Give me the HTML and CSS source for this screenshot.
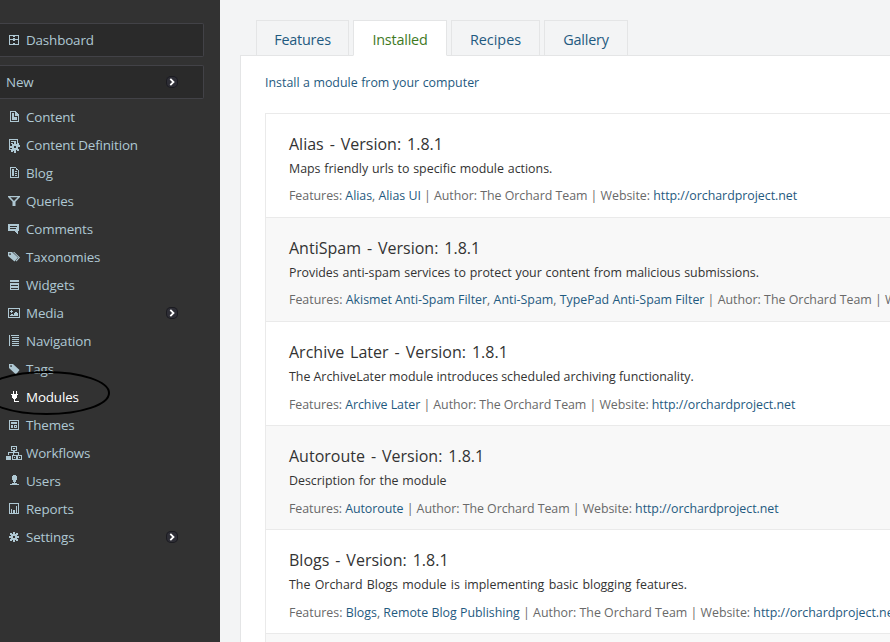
FILE: index.html
```html
<!DOCTYPE html>
<html lang="en">
<head>
<meta charset="utf-8">
<title>Modules</title>
<link rel="stylesheet" href="styles.css">
</head>
<body>
<div class="app">
<aside class="sidebar">
  <div class="box"><svg class="icon" viewBox="0 0 16 16"><path d="M3 3h10v10H3zM4 4v3h3V6h2v1h3V4H9v1H7V4zM4 8v4h3v-1h2v1h3V8H9v1H7V8z" fill-rule="evenodd"/></svg><a>Dashboard</a></div>
  <div class="box"><a>New</a><span class="arrow"><svg viewBox="0 0 12 12"><path d="M4.3 2.8 7.5 6 4.3 9.2"/></svg></span></div>
  <nav class="menu">
    <div class="item"><svg class="icon" viewBox="0 0 16 16"><path d="M4 2h6v1h1v1h1v1h1v8H4zM5 3v9h7V7H9V3z" fill-rule="evenodd"/><path d="M6 4h2v4h3v3H6z"/></svg><a>Content</a></div>
    <div class="item"><svg class="icon" viewBox="0 0 16 16"><path d="M3 2h9v4h-1V3H4v9h2v1H3zM5 4h5v1H5zM5 6h2v1H5z"/><path d="M8 5h2v2h1V6h2v2h1v2h-2v2h1v2h-2v-1h-1v3H8v-2H7v1H5v-2h1v-2H4V9h2V7h2zM8 9v2h2V9z" fill-rule="evenodd"/></svg><a>Content Definition</a></div>
    <div class="item"><svg class="icon" viewBox="0 0 16 16"><path d="M4 2h6v1h1v1h1v1h1v8H4zM5 3v9h7V5h-2V3z" fill-rule="evenodd"/><path d="M6 4h2v7H6zM9 6h2v1H9zM9 8h2v1H9zM9 10h2v1H9z"/></svg><a>Blog</a></div>
    <div class="item"><svg class="icon smooth" viewBox="0 0 16 16"><path d="M2 3h12v1L9.5 8.8V13h-3V8.8L2 4zM4.3 4.3 8 8l3.7-3.7z" fill-rule="evenodd"/></svg><a>Queries</a></div>
    <div class="item"><svg class="icon" viewBox="0 0 16 16"><path d="M2 3h11v7h-1v3h-1v-1h-1v-1H9v-1H2zM4 5v1h7V5zM4 7v1h6V7z" fill-rule="evenodd"/></svg><a>Comments</a></div>
    <div class="item"><svg class="icon smooth" viewBox="0 0 16 16"><path d="M2 3h4l6 5.5-3.5 4L2 7zM4 4.2a.8.8 0 1 0 .1 0z" fill-rule="evenodd"/><path d="M7 3h1.3L14 8.5 10.5 12.5l-.8-.8L12.5 8.5z"/></svg><a>Taxonomies</a></div>
    <div class="item"><svg class="icon" viewBox="0 0 16 16"><path d="M4 3h9v2H4zM4 6h9v7H4zM5 8v1h7V8zM5 11v1h7v-1z" fill-rule="evenodd"/></svg><a>Widgets</a></div>
    <div class="item"><svg class="icon" viewBox="0 0 16 16"><path d="M2 3h12v10H2zM3 4v8h10V4z" fill-rule="evenodd"/><path d="M5 5h1v1h1v1H6v1H5V7H4V6h1zM4 11v-1h1V9h2v1h1V8h1V7h2v1h1v3z"/></svg><a>Media</a><span class="arrow"><svg viewBox="0 0 12 12"><path d="M4.3 2.8 7.5 6 4.3 9.2"/></svg></span></div>
    <div class="item"><svg class="icon" viewBox="0 0 16 16"><path d="M3 2h1v11H3zM5 2h8v1H5zM6 4h7v1H6zM6 6h7v1H6zM6 8h7v1H6zM6 10h7v1H6zM6 12h7v1H6z"/></svg><a>Navigation</a></div>
    <div class="item"><svg class="icon smooth" viewBox="0 0 16 16"><path d="M3 3h4l6.5 6-3.5 4.5L3 7zM5 4.3a.8.8 0 1 0 .1 0z" fill-rule="evenodd"/></svg><a>Tags</a></div>
    <div class="item current"><svg class="icon" viewBox="0 0 16 16"><path d="M7 2h1v3h2V2h1v3h1v1h-1v3h-1v1H9v2h4v1H8v-3H7V9H6V6H5V5h2z"/></svg><a>Modules</a></div>
    <div class="item"><svg class="icon" viewBox="0 0 16 16"><path d="M3 3h10v10H3zM4 4v8h8V4z" fill-rule="evenodd"/><path d="M5 5h6v2H5zM5 8h2v3H5zM8 8h3v3H8zM9 9v1h1V9z" fill-rule="evenodd"/></svg><a>Themes</a></div>
    <div class="item"><svg class="icon" viewBox="0 0 16 16"><path d="M5 1h6v5H5zM6 2v3h4V2zM7 3h2v1H7zM7 6h1v2H3v2H2V7h5zM8 6h1v1h4v3h-1V8H8zM0 11h5v4H0zM6 10h5v5H6zM7 11v3h3v-3zM8 12h1v1H8zM11 10h5v5h-5zM12 11v3h3v-3zM13 12h1v1h-1zM7 8h1v2H7z" fill-rule="evenodd"/></svg><a>Workflows</a></div>
    <div class="item"><svg class="icon" viewBox="0 0 16 16"><path d="M7 2h3v1h1v4h-1v2H9v1h2v1h2v1H4v-1h2v-1h2V9H7V7H6V3h1z"/></svg><a>Users</a></div>
    <div class="item"><svg class="icon" viewBox="0 0 16 16"><path d="M3 2h10v11H3zM4 3v9h8V3z" fill-rule="evenodd"/><path d="M5 8h1v4H5zM7 9h2v3H7zM10 5h1v7h-1z"/></svg><a>Reports</a></div>
    <div class="item"><svg class="icon" viewBox="0 0 16 16"><path d="M7 3h2v2h1V4h2v2h-1v1h2v2h-2v1h1v2h-2v-1H9v2H7v-2H6v1H4v-2h1V9H3V7h2V6H4V4h2v1h1zM7 7v2h2V7z" fill-rule="evenodd"/></svg><a>Settings</a><span class="arrow"><svg viewBox="0 0 12 12"><path d="M4.3 2.8 7.5 6 4.3 9.2"/></svg></span></div>
  </nav>
  <svg class="marker" viewBox="0 0 112 48"><ellipse cx="46.5" cy="24" rx="62.5" ry="21"/></svg>
</aside>
<main class="main">
  <div class="tabs"><a class="tab t1">Features</a><a class="tab t2 active">Installed</a><a class="tab t3">Recipes</a><a class="tab t4">Gallery</a></div>
  <section class="panel">
    <a class="install">Install a module from your computer</a>
    <ul class="modules">
      <li><h2>Alias - Version: 1.8.1</h2><p>Maps friendly urls to specific module actions.</p><div class="meta snug">Features: <a>Alias</a>, <a>Alias UI</a> | Author: The Orchard Team | Website: <a>http://orchardproject.net</a></div></li>
      <li><h2>AntiSpam - Version: 1.8.1</h2><p>Provides anti-spam services to protect your content from malicious submissions.</p><div class="meta">Features: <a>Akismet Anti-Spam Filter</a>, <a>Anti-Spam</a>, <a>TypePad Anti-Spam Filter</a> | Author: The Orchard Team | Website: <a>http://orchardproject.net</a></div></li>
      <li><h2>Archive Later - Version: 1.8.1</h2><p class="even">The ArchiveLater module introduces scheduled archiving functionality.</p><div class="meta tight">Features: <a>Archive Later</a> | Author: The Orchard Team | Website: <a>http://orchardproject.net</a></div></li>
      <li><h2>Autoroute - Version: 1.8.1</h2><p>Description for the module</p><div class="meta tight">Features: <a>Autoroute</a> | Author: The Orchard Team | Website: <a>http://orchardproject.net</a></div></li>
      <li><h2>Blogs - Version: 1.8.1</h2><p class="wide">The Orchard Blogs module is implementing basic blogging features.</p><div class="meta">Features: <a>Blogs</a>, <a>Remote Blog Publishing</a> | Author: The Orchard Team | Website: <a>http://orchardproject.net</a></div></li>
      <li></li>
    </ul>
  </section>
</main>
</div>
</body>
</html>
```
FILE: styles.css
```css
* { box-sizing: border-box; }
body { margin: 0; font-family: "Open Sans", "Noto Sans", sans-serif; overflow: hidden; }
.app { display: flex; width: 890px; height: 642px; overflow: hidden; }
.sidebar { position: relative; width: 220px; flex: none; background: #323232; color: #afc8d3; padding-top: 23px; font-size: 13.4px; letter-spacing: -.15px; overflow: hidden; }
.box, .item { display: flex; align-items: center; padding-left: 6px; width: 204px; }
.box { height: 34px; margin-bottom: 8px; background: #2a2a2a; border: 1px solid #424247; border-left: 0; border-radius: 0 2px 2px 0; }
.menu { margin-top: -4px; }
.item { height: 28px; }
.icon { width: 16px; height: 16px; margin-right: 4px; flex: none; fill: #afc8d3; shape-rendering: crispEdges; }
.smooth { shape-rendering: auto; }
.current { color: #fff; }
.current .icon { fill: #fff; }
.arrow { display: flex; width: 12px; height: 12px; margin-left: auto; margin-right: 25px; border-radius: 5px; background: #2e2e36; box-shadow: inset 0 0 0 1px #1b1b20; }
.item .arrow { margin-right: 26px; }
.arrow path { fill: none; stroke: #fff; stroke-width: 1.8; }
.marker { position: absolute; left: 0; top: 369px; width: 112px; height: 48px; fill: none; stroke: #000; stroke-width: 2; }
.main { flex: 1; min-width: 0; background: #f3f4f5; padding: 20px 0 0 20px; overflow: hidden; }
.tabs { display: flex; gap: 4px; padding-left: 16px; height: 36px; position: relative; }
.tab { height: 36px; border: 1px solid #e4e5e6; text-align: center; line-height: 37px; font-size: 14.4px; letter-spacing: -.2px; color: #1f5a80; }
.t1 { width: 93px; } .t2 { width: 94px; } .t3 { width: 89px; letter-spacing: 0; } .t4 { width: 84px; }
.tab.active { background: #fff; border-bottom-color: #fff; color: #3f7a1f; }
.panel { width: 900px; height: 700px; margin-top: -1px; background: #fff; border: 1px solid #e4e5e6; padding: 17px 24px; }
.install { display: block; height: 20px; line-height: 20px; font-size: 12.4px; word-spacing: .3px; color: #1f5a80; }
.modules { list-style: none; padding: 0; margin: 20px 0 0; border: 1px solid #eaeaea; border-bottom: 0; }
.modules li { height: 104px; padding: 18px 23px 0; border-bottom: 1px solid #eaeaea; white-space: nowrap; }
.modules li:nth-child(even) { background: #f8f8f8; }
h2 { margin: 0; font-size: 16px; font-weight: 400; line-height: 24px; word-spacing: 1.8px; color: #333; }
p { margin: 3px 0 0; font-size: 12.4px; line-height: 20px; word-spacing: .6px; color: #333; }
p.even { word-spacing: -.1px; }
p.wide { word-spacing: 1.1px; }
.meta { margin-top: 7px; font-size: 12.4px; line-height: 20px; color: #696969; }
.modules li:nth-child(n+3) .meta { margin-top: 8px; }
.snug { letter-spacing: -.03px; }
.tight { letter-spacing: -.05px; }
.meta a { color: #1f5a80; }
```
